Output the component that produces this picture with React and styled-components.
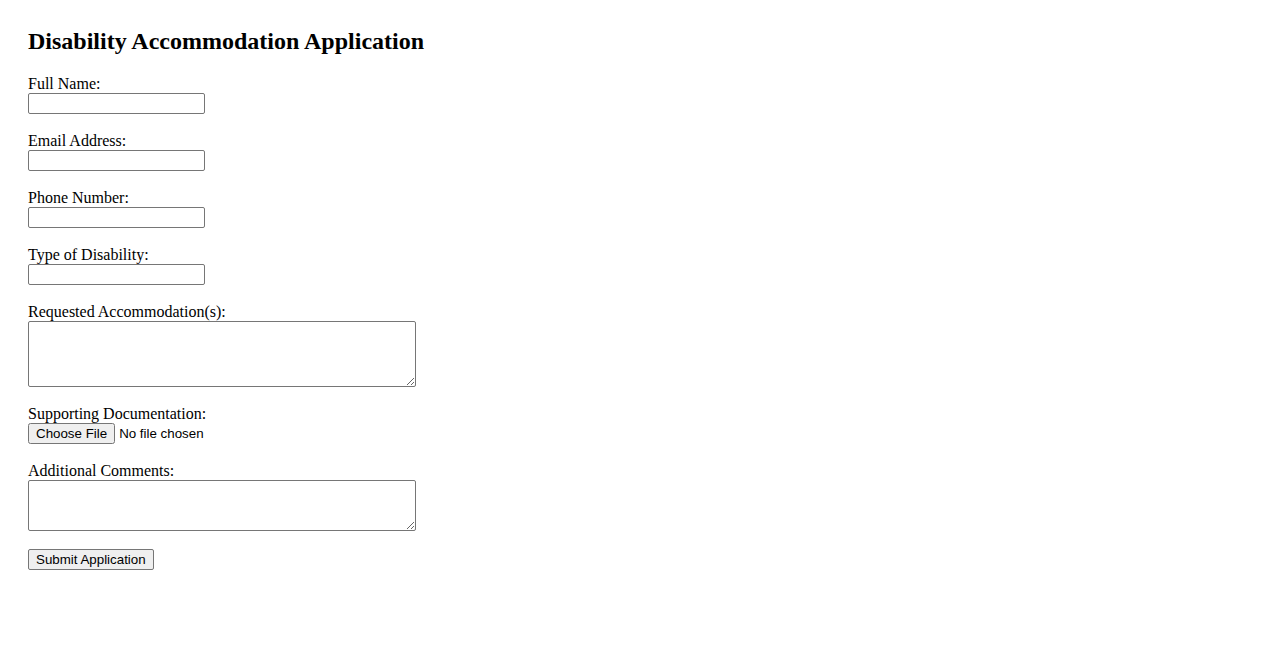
import styled, { createGlobalStyle } from "styled-components";

const GlobalStyle = createGlobalStyle`
  body {
    margin: 0;
    background: #ffffff;
    color: #000000;
    font-family: "Liberation Serif", "Times New Roman", serif;
  }
`;

const fields = [
  { id: "name", label: "Full Name:", type: "text" },
  { id: "email", label: "Email Address:", type: "email" },
  { id: "phone", label: "Phone Number:", type: "tel" },
  { id: "disability", label: "Type of Disability:", type: "text" },
];

export default function App() {
  return (
    <Page>
      <GlobalStyle />
      <Title>Disability Accommodation Application</Title>
      <Form onSubmit={(e) => e.preventDefault()}>
        {fields.map((f) => (
          <Group key={f.id}>
            <Label htmlFor={f.id}>{f.label}</Label>
            <TextInput id={f.id} type={f.type} />
          </Group>
        ))}
        <Group>
          <Label htmlFor="accommodation">Requested Accommodation(s):</Label>
          <TextArea id="accommodation" $height={66} />
        </Group>
        <Group>
          <Label htmlFor="docs">Supporting Documentation:</Label>
          <FileInput id="docs" type="file" />
        </Group>
        <Group>
          <Label htmlFor="comments">Additional Comments:</Label>
          <TextArea id="comments" $height={51} />
        </Group>
        <SubmitButton type="submit">Submit Application</SubmitButton>
      </Form>
    </Page>
  );
}

const Page = styled.div`
  padding: 27px 28px 28px;
`;

const Title = styled.h2`
  margin: 0 0 20px;
  font-family: "Liberation Serif", "Times New Roman", serif;
  font-size: 24px;
  font-weight: bold;
  line-height: 28px;
`;

const Form = styled.form`
  display: flex;
  flex-direction: column;
  align-items: flex-start;
  gap: 18px;
`;

const Group = styled.div`
  display: flex;
  flex-direction: column;
  align-items: flex-start;
`;

const Label = styled.label`
  font-size: 16px;
  line-height: 18px;
`;

const TextInput = styled.input`
  box-sizing: border-box;
  width: 177px;
  height: 21px;
  margin: 0;
  padding: 1px 2px;
  border: 1px solid #767676;
  border-radius: 2px;
  font-family: "Liberation Sans", Arial, sans-serif;
  font-size: 13.33px;
`;

const TextArea = styled.textarea`
  box-sizing: border-box;
  display: block;
  width: 388px;
  height: ${(p) => p.$height}px;
  margin: 0;
  padding: 2px;
  border: 1px solid #767676;
  border-radius: 2px;
  font-family: "Liberation Mono", monospace;
  font-size: 13.33px;
`;

const FileInput = styled.input`
  margin: 0;
  height: 21px;
  font-family: "Liberation Sans", Arial, sans-serif;
  font-size: 13.33px;
`;

const SubmitButton = styled.button`
  box-sizing: border-box;
  height: 21px;
  margin: 0;
  padding: 1px 7px;
  border: 1px solid #767676;
  border-radius: 2px;
  background: #efefef;
  color: #000000;
  font-family: "Liberation Sans", Arial, sans-serif;
  font-size: 13.33px;
`;
